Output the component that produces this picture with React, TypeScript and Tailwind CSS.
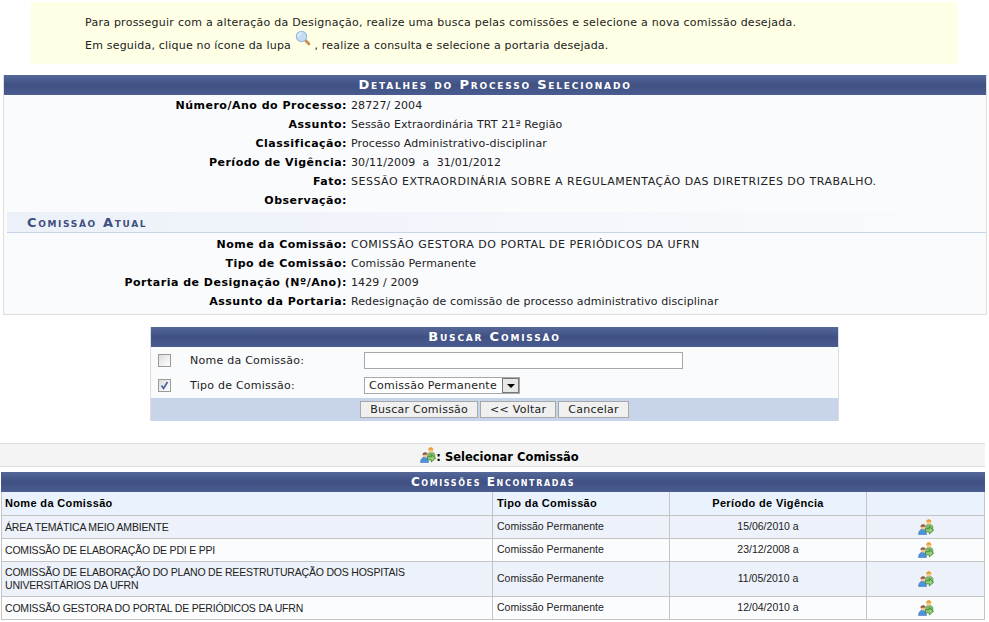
const detalhes = [
  ['Número/Ano do Processo:', '28727/ 2004'],
  ['Assunto:', 'Sessão Extraordinária TRT 21ª Região'],
  ['Classificação:', 'Processo Administrativo-disciplinar'],
  ['Período de Vigência:', '30/11/2009  a  31/01/2012'],
  ['Fato:', 'SESSÃO EXTRAORDINÁRIA SOBRE A REGULAMENTAÇÃO DAS DIRETRIZES DO TRABALHO.'],
  ['Observação:', ''],
];

const atual = [
  ['Nome da Comissão:', 'COMISSÃO GESTORA DO PORTAL DE PERIÓDICOS DA UFRN'],
  ['Tipo de Comissão:', 'Comissão Permanente'],
  ['Portaria de Designação (Nº/Ano):', '1429 / 2009'],
  ['Assunto da Portaria:', 'Redesignação de comissão de processo administrativo disciplinar'],
];

const comissoes = [
  { nome: 'ÁREA TEMÁTICA MEIO AMBIENTE', periodo: '15/06/2010 a', h: 'h-[23px]' },
  { nome: 'COMISSÃO DE ELABORAÇÃO DE PDI E PPI', periodo: '23/12/2008 a', h: 'h-[23px]' },
  { nome: 'COMISSÃO DE ELABORAÇÃO DO PLANO DE REESTRUTURAÇÃO DOS HOSPITAIS UNIVERSITÁRIOS DA UFRN', periodo: '11/05/2010 a', h: 'h-[35px]' },
  { nome: 'COMISSÃO GESTORA DO PORTAL DE PERIÓDICOS DA UFRN', periodo: '12/04/2010 a', h: 'h-[23px]' },
];

const cols = 'grid grid-cols-[491px_177px_197px_117px]';

function Lupa() {
  return (
    <svg width="16" height="16" viewBox="0 0 16 16" className="inline-block align-baseline relative -top-[3px]">
      <path d="M10 10 14 14" stroke="#c98a4e" strokeWidth="2.6" strokeLinecap="round" />
      <circle cx="6.5" cy="6.5" r="5.2" fill="#c6dcf5" stroke="#9ab8dc" strokeWidth="1.1" />
      <path d="M3.5 6a3 3 0 0 1 3-3" stroke="#ffffff" strokeWidth="1" fill="none" />
    </svg>
  );
}

function Pessoas({ className = '' }: { className?: string }) {
  return (
    <svg width="16" height="16" viewBox="0 0 16 16" className={className}>
      {/* pessoa de trás */}
      <path d="M7.5 11V8c0-1.600 1.400-2.800 3.500-2.800S15 6.400 15 8v4z" fill="#7fb86a" stroke="#5c9a4a" strokeWidth="0.5" />
      <circle cx="10.800" cy="3" r="2.500" fill="#f3c98c" />
      <path d="M8.300 3c0-1.700 1.100-2.700 2.500-2.700s2.500 1 2.500 2.700c-1.200-.2-3.800-.2-5 0z" fill="#e3a02e" />
      {/* pessoa da frente */}
      <path d="M.5 15.500c0-3.200 1.700-5.200 4-5.200s4 2 4 5.200z" fill="#4f92dc" stroke="#2f68b4" strokeWidth="0.5" />
      <circle cx="5" cy="8" r="2.400" fill="#eec09a" />
      <path d="M2.500 8c0-1.700 1.100-2.700 2.600-2.700 1.400 0 2.400.9 2.500 2.100-1.500.1-3.800.1-5.100.6z" fill="#8c5a3c" />
      {/* seta */}
      <path d="M7.500 9.800h3.800V7.600l4.200 3.700-4.200 3.700v-2.200H7.500z" fill="#9ccc7c" stroke="#2f8a28" strokeWidth="0.8" />
    </svg>
  );
}

function Titulo({ children, className = 'text-[13px] tracking-[1.8px]' }: { children: string; className?: string }) {
  return (
    <div className={`h-[20px] bg-gradient-to-b from-[#55689a] via-[#405083] to-[#4a5c90] text-white text-center font-bold leading-[20px] [font-variant:small-caps] ${className}`}>
      {children}
    </div>
  );
}

function Linha({ label, valor }: { label: string; valor: string }) {
  const caixaAlta = valor === valor.toUpperCase() && /[A-Z]/.test(valor);
  return (
    <div className="flex h-[19px] items-center pt-[1px]">
      <div className="w-[343px] shrink-0 text-right font-bold text-black tracking-[0.5px]">{label}</div>
      <div className={`pl-[4px] whitespace-pre text-[#222222] ${caixaAlta ? 'tracking-[0.5px]' : 'tracking-[0.1px]'}`}>{valor}</div>
    </div>
  );
}

function Botao({ children }: { children: string }) {
  return (
    <button className="h-[17px] px-[9px] bg-[#f0f0f0] border border-[#a8a8a8] text-[11px] leading-[15px] tracking-[0.25px] text-[#222222] font-['DejaVu_Sans',sans-serif]">
      {children}
    </button>
  );
}

export default function App() {
  return (
    <div className="w-[989px] h-[622px] overflow-hidden bg-white pt-[2px] font-['DejaVu_Sans',Verdana,sans-serif] text-[11px]">
      {/* Aviso */}
      <div className="ml-[31px] w-[926px] h-[62px] bg-[#ffffe5] pl-[54px] pt-[11px] text-[#222222] leading-[20px]">
        <p className="tracking-[0.25px]">Para prosseguir com a alteração da Designação, realize uma busca pelas comissões e selecione a nova comissão desejada.</p>
        <p className="tracking-[0.2px]">Em seguida, clique no ícone da lupa <Lupa /> , realize a consulta e selecione a portaria desejada.</p>
      </div>

      {/* Detalhes */}
      <div className="ml-[3px] mt-[11px] w-[984px] h-[240px] border-x border-b border-[#dddddd] bg-[#fafbfd]">
        <Titulo>Detalhes do Processo Selecionado</Titulo>
        <div className="pt-[1px]">
          {detalhes.map(([l, v]) => (
            <Linha key={l} label={l} valor={v} />
          ))}
        </div>
        <div className="ml-[3px] mt-[2px] mb-[2px] h-[21px] border-b border-[#c8d4e8] bg-gradient-to-r from-[#ecf1f9] to-[#fafbfd] pl-[20px] pt-[1px] font-bold text-[13px] leading-[19px] tracking-[1.65px] text-[#3f4f80] [font-variant:small-caps]">
          Comissão Atual
        </div>
        {atual.map(([l, v]) => (
          <Linha key={l} label={l} valor={v} />
        ))}
      </div>

      {/* Busca */}
      <div className="ml-[150px] mt-[12px] w-[689px] h-[94px] border-x border-b border-[#dddddd] bg-[#fafbfd]">
        <Titulo>Buscar Comissão</Titulo>
        <div className="flex h-[26px] items-center text-[#222222] tracking-[0.25px]">
          <span className="ml-[7px] w-[13px] h-[13px] border border-[#9a9a9a] bg-gradient-to-br from-[#dcdcdc] to-[#ffffff]" />
          <span className="ml-[19px] w-[174px] pt-[3px]">Nome da Comissão:</span>
          <span className="w-[319px] h-[17px] border border-[#a8a8a8] bg-white" />
        </div>
        <div className="flex h-[25px] items-center text-[#222222] tracking-[0.25px]">
          <span className="ml-[7px] w-[13px] h-[13px] border border-[#9a9a9a] bg-gradient-to-br from-[#dcdcdc] to-[#ffffff] flex items-center justify-center">
            <svg width="9" height="9" viewBox="0 0 9 9">
              <path d="M1.500 4.500 3.500 7.500 7.500 1" stroke="#4a5f9e" strokeWidth="1.600" fill="none" />
            </svg>
          </span>
          <span className="ml-[19px] w-[174px] pt-[2px]">Tipo de Comissão:</span>
          <span className="w-[156px] h-[17px] border border-[#a8a8a8] bg-white flex items-center pl-[4px] justify-between">
            <span className="pt-[2px]">Comissão Permanente</span>
            <span className="w-[17px] h-[15px] border border-[#777777] bg-[#e8e8e8] flex items-center justify-center">
              <span className="border-x-[4px] border-t-[4px] border-x-transparent border-t-black" />
            </span>
          </span>
        </div>
        <div className="flex h-[23px] items-center justify-center gap-[2px] bg-[#c8d4ea]">
          <Botao>Buscar Comissão</Botao>
          <Botao>{'<< Voltar'}</Botao>
          <Botao>Cancelar</Botao>
        </div>
      </div>

      {/* Legenda */}
      <div className="mt-[22px] w-[985px] h-[24px] border-y border-[#dddddd] bg-[#f4f4f4] flex items-center justify-center pl-[14px] font-bold text-black text-[11.5px]">
        <Pessoas className="-mt-[1px]" />
        <span className="pt-[6px]">: Selecionar Comissão</span>
      </div>

      {/* Resultado */}
      <div className="ml-[1px] mt-[5px] w-[984px] font-['Liberation_Sans',Arial,sans-serif] text-[10.5px] text-[#222222]">
        <div className="font-['DejaVu_Sans',sans-serif]">
          <Titulo className="text-[12px] tracking-[1.6px]">Comissões Encontradas</Titulo>
        </div>
        <div className="border-x border-b border-[#c4c4c4]">
          <div className={`${cols} h-[23px] items-center bg-[#eaf3fd] font-bold text-[11px] tracking-[0.35px] text-black`}>
            <div className="pl-[3px] h-full leading-[23px] border-r border-[#c4c4c4]">Nome da Comissão</div>
            <div className="pl-[4px] h-full leading-[23px] border-r border-[#c4c4c4]">Tipo da Comissão</div>
            <div className="text-center h-full leading-[23px] border-r border-[#c4c4c4]">Período de Vigência</div>
            <div />
          </div>
          {comissoes.map((c, i) => (
            <div key={c.nome} className={`${cols} ${c.h} items-center border-t border-[#c4c4c4] ${i % 2 === 0 ? 'bg-[#edf1f9]' : 'bg-[#fbfcfe]'}`}>
              <div className="pl-[3px] pr-[60px] h-full flex items-center leading-[13px] tracking-[-0.2px] border-r border-[#c4c4c4]">{c.nome}</div>
              <div className="pl-[4px] h-full flex items-center border-r border-[#c4c4c4]">Comissão Permanente</div>
              <div className="h-full flex items-center justify-center border-r border-[#c4c4c4]">{c.periodo}</div>
              <div className="flex justify-center">
                <Pessoas />
              </div>
            </div>
          ))}
        </div>
      </div>
    </div>
  );
}
